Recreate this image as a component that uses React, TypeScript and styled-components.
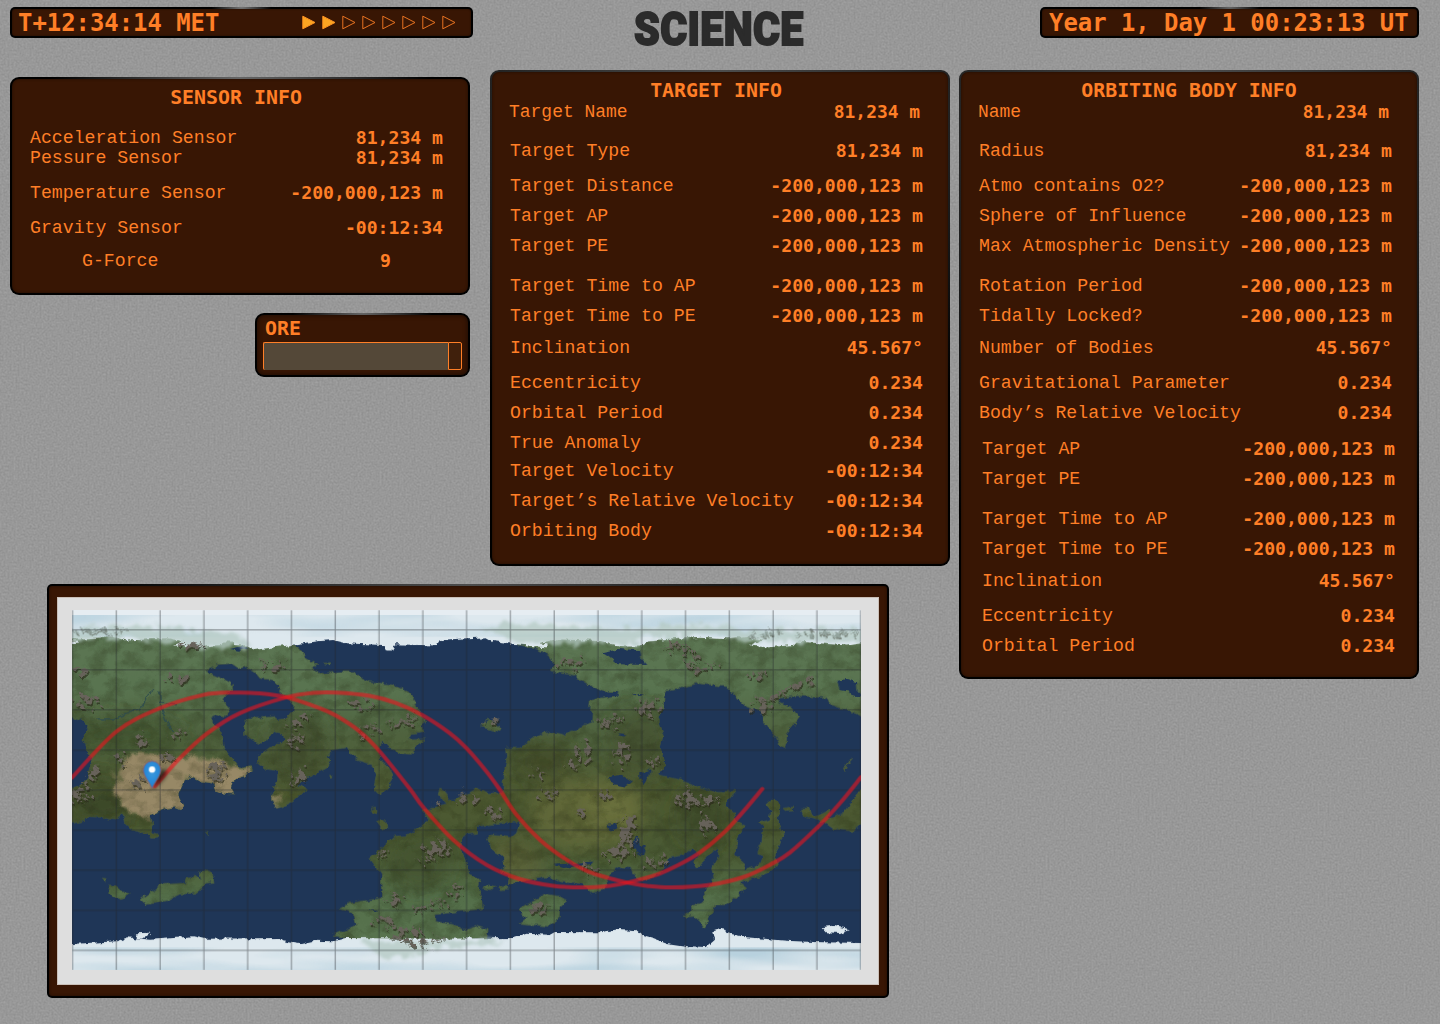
import React from "react";
import styled, { createGlobalStyle } from "styled-components";

const ORANGE = "#ff7f27";
const BROWN = "#381604";

const GlobalStyle = createGlobalStyle`
  * { box-sizing: border-box; }
  html, body { margin: 0; padding: 0; background: #999; }
  body { color: ${ORANGE}; font-family: "DejaVu Sans Mono", monospace; }
`;

const Page = styled.div`
  position: relative;
  width: 1440px;
  height: 1024px;
  overflow: hidden;
  background: #999;
`;

const Grain = styled.svg`
  position: absolute;
  inset: 0;
  width: 100%;
  height: 100%;
`;

const Content = styled.div`
  position: relative;
  display: flex;
  flex-direction: column;
  padding: 7px 21px 0 10px;
`;

const Header = styled.header`
  display: grid;
  grid-template-columns: 463px 1fr 379px;
  height: 63px;
`;

const Panel = styled.div<{ $radius?: number; $glow: string; $glowColor?: string }>`
  border: 2px solid transparent;
  border-radius: ${(p) => p.$radius ?? 9}px;
  background:
    radial-gradient(${BROWN}, ${BROWN}) padding-box,
    radial-gradient(${(p) => p.$glow} at 50% 0, ${(p) => p.$glowColor ?? "#4c4c4c"}, #000) border-box;
`;

const Bar = styled(Panel)`
  display: flex;
  align-items: center;
  justify-content: space-between;
  height: 31px;
  padding: 0 15px 0 6px;
  box-shadow: inset 0 0 2px rgba(0, 0, 0, 0.5);
`;

const DateBar = styled(Bar)`
  padding-left: 7px;
`;

const Clock = styled.span`
  font-size: 23.9px;
  line-height: 28px;
  font-weight: 700;
  white-space: pre;
`;

const Arrows = styled.div`
  display: flex;
  gap: 6px;
`;

const Arrow = styled.svg`
  display: block;
  width: 14px;
  height: 15px;
`;

const Title = styled.h1`
  margin: 0;
  padding-left: 161px;
  height: 44px;
`;

const TitleWord = styled.span`
  display: block;
  width: 190px;
  color: #2b2b2b;
  font: 900 46px/44px Roboto, sans-serif;
  letter-spacing: 0.4px;
  -webkit-text-stroke: 1.8px #2b2b2b;
  transform: scaleX(0.895);
  transform-origin: 0 50%;
  white-space: nowrap;
`;

const Main = styled.main`
  display: grid;
  grid-template-columns: 940px 460px;
  gap: 9px;
  align-items: start;
`;

const Left = styled.div`
  display: flex;
  flex-direction: column;
  gap: 18px;
`;

const Upper = styled.div`
  display: grid;
  grid-template-columns: 460px 460px;
  gap: 20px;
  align-items: start;
`;

const SensorColumn = styled.div`
  display: flex;
  flex-direction: column;
  align-items: flex-end;
  gap: 18px;
  padding-top: 7px;
`;

const InfoPanel = styled(Panel)<{ $height: number }>`
  width: 460px;
  height: ${(p) => p.$height}px;
  padding: 8px 25px 0 18px;
  box-shadow: inset 0 0 3px rgba(0, 0, 0, 0.5);
`;

const PanelTitle = styled.h2<{ $pull?: number; $after?: number }>`
  margin: 0 ${(p) => p.$pull ?? 1}px ${(p) => p.$after ?? 0}px 0;
  font-size: 19.9px;
  line-height: 22px;
  font-weight: 700;
  text-align: center;
`;

const Row = styled.div<{ $gap?: number; $dx?: number; $inset?: number; $small?: boolean }>`
  display: flex;
  justify-content: space-between;
  margin: ${(p) => p.$gap ?? 0}px ${(p) => -(p.$dx ?? 0) + (p.$small ? 2 : 0)}px 0 ${(p) => p.$dx ?? 0}px;
  padding: 0 ${(p) => p.$inset ?? 0}px;
  font-size: ${(p) => (p.$small ? 17.9 : 18.13)}px;
  line-height: 20px;
  white-space: pre;
`;

const Label = styled.span`
  font-family: "Liberation Mono", monospace;
  font-size: 1.004em;
`;

const Value = styled.span`
  font-weight: 700;
`;

const OrePanel = styled(Panel)`
  width: 215px;
  height: 64px;
  padding: 1px 6px 0 6px;
  box-shadow: inset 0 0 5px rgba(0, 0, 0, 0.6);
`;

const OreTitle = styled.h3`
  margin: 0 0 1px;
  padding-left: 2px;
  font-size: 19.9px;
  line-height: 25px;
`;

const Gauge = styled.div`
  display: flex;
  width: 199px;
  height: 28px;
`;

const GaugeFill = styled.div`
  flex: 1;
  background: #544838;
  border: 1px solid ${ORANGE};
  border-width: 1px 0 0 1px;
  border-radius: 2px 0 0 2px;
`;

const GaugeRest = styled.div`
  width: 14px;
  background: #40200c;
  border: 1px solid ${ORANGE};
  border-radius: 0 2px 2px 0;
`;

const MapPanel = styled(Panel)`
  width: 842px;
  height: 414px;
  margin-left: 37px;
  padding: 11px 8px;
  box-shadow: inset 0 0 3px rgba(0, 0, 0, 0.5);
`;

const MapPaper = styled.div`
  width: 822px;
  height: 388px;
  padding: 13px 0 0 15px;
  background: #dedede;
  box-shadow: inset 0 0 0 1px #c9bfb8;
`;

const MapSvg = styled.svg`
  display: block;
  width: 789px;
  height: 360px;
`;

type Item = [string, string, number, number?];

const sensorRows: Item[] = [
  ["Acceleration Sensor", "81,234 m", 0],
  ["Pessure Sensor", "81,234 m", 0],
  ["Temperature Sensor", "-200,000,123 m", 15],
  ["Gravity Sensor", "-00:12:34", 15],
];

const targetRows: Item[] = [
  ["Target Type", "81,234 m", 19],
  ["Target Distance", "-200,000,123 m", 15],
  ["Target AP", "-200,000,123 m", 10],
  ["Target PE", "-200,000,123 m", 10],
  ["Target Time to AP", "-200,000,123 m", 20],
  ["Target Time to PE", "-200,000,123 m", 10],
  ["Inclination", "45.567°", 12],
  ["Eccentricity", "0.234", 15],
  ["Orbital Period", "0.234", 10],
  ["True Anomaly", "0.234", 10],
  ["Target Velocity", "-00:12:34", 8],
  ["Target’s Relative Velocity", "-00:12:34", 10],
  ["Orbiting Body", "-00:12:34", 10],
];

const bodyRows: Item[] = [
  ["Radius", "81,234 m", 19],
  ["Atmo contains O2?", "-200,000,123 m", 15],
  ["Sphere of Influence", "-200,000,123 m", 10],
  ["Max Atmospheric Density", "-200,000,123 m", 10],
  ["Rotation Period", "-200,000,123 m", 20],
  ["Tidally Locked?", "-200,000,123 m", 10],
  ["Number of Bodies", "45.567°", 12],
  ["Gravitational Parameter", "0.234", 15],
  ["Body’s Relative Velocity", "0.234", 10],
  ["Target AP", "-200,000,123 m", 16, 3],
  ["Target PE", "-200,000,123 m", 10, 3],
  ["Target Time to AP", "-200,000,123 m", 20, 3],
  ["Target Time to PE", "-200,000,123 m", 10, 3],
  ["Inclination", "45.567°", 12, 3],
  ["Eccentricity", "0.234", 15, 3],
  ["Orbital Period", "0.234", 10, 3],
];

const Rows = ({ items }: { items: Item[] }) => (
  <>
    {items.map(([label, value, gap, dx]) => (
      <Row key={label} $gap={gap} $dx={dx}>
        <Label>{label}</Label>
        <Value>{value}</Value>
      </Row>
    ))}
  </>
);

/* Map geography, in thirds of a pixel. Shapes run past the frame so rough edges stay outside it. */
const westLand =
  "50,150 50,400 97,425 125,435 145,455 130,490 150,540 155,570 145,610 120,632 97,640 50,650 50,745 97,745 130,740 150,725 185,727 225,735 250,715 255,745 275,765 320,775 330,790 360,790 355,778 330,772 340,750 330,720 380,700 405,697 425,705 430,690 415,660 435,615 455,605 480,618 520,625 527,645 550,655 583,657 573,640 580,615 610,605 640,585 635,575 600,580 575,550 555,520 550,490 540,460 510,432 530,420 555,430 570,400 545,372 580,345 575,325 550,312 510,295 505,285 530,272 575,268 595,282 620,275 645,290 660,310 700,315 720,335 715,350 745,370 762,390 758,410 740,432 715,435 700,422 625,430 612,450 615,480 640,495 655,510 680,495 700,470 725,475 735,490 710,515 690,518 660,540 652,560 680,585 712,590 710,620 697,650 698,675 710,700 725,697 760,680 800,640 770,630 830,595 860,580 870,560 860,545 880,525 920,518 950,555 1000,570 1010,600 1002,640 1020,658 1045,640 1060,600 1045,575 1020,555 1018,520 1025,495 1040,515 1080,535 1115,538 1130,510 1160,492 1105,495 1120,475 1150,470 1145,450 1158,440 1135,405 1130,385 1110,355 1060,330 990,320 960,305 945,290 900,290 850,296 815,278 835,270 800,250 790,230 760,210 720,190 720,150";
const eastLand =
  "1430,150 1430,208 1490,222 1530,240 1540,265 1535,290 1600,300 1640,325 1690,350 1730,352 1730,362 1680,370 1645,378 1643,395 1660,410 1658,445 1620,460 1575,480 1530,470 1480,490 1440,520 1400,520 1403,545 1390,600 1390,655 1350,655 1310,640 1260,670 1230,680 1215,645 1200,640 1195,660 1210,670 1220,690 1180,700 1150,705 1165,735 1150,750 1105,782 1060,785 1035,810 990,850 1025,900 1025,970 930,985 900,1002 940,1015 950,1050 920,1065 880,1082 940,1095 1190,1100 1340,1090 1345,1065 1310,1055 1280,1065 1240,1050 1185,1040 1185,1020 1240,1012 1280,1008 1328,1002 1325,970 1315,950 1320,915 1285,900 1280,870 1260,815 1270,780 1310,775 1310,755 1400,742 1440,740 1430,775 1415,788 1350,780 1340,790 1355,825 1390,845 1395,880 1380,890 1410,900 1405,930 1440,920 1530,905 1560,920 1630,930 1660,955 1685,950 1700,930 1710,895 1740,875 1775,880 1780,900 1805,915 1840,910 1870,885 1885,850 1930,840 1955,820 1980,840 1960,865 1970,885 1980,865 2030,820 2037,840 2015,880 2025,910 1990,950 1995,980 1955,995 1955,1010 1925,1025 1960,1022 1980,1040 1995,1060 2005,1030 2020,1010 2025,990 2060,990 2120,940 2100,925 2180,895 2220,870 2200,845 2215,820 2230,780 2215,750 2220,690 2200,672 2180,690 2195,710 2190,735 2155,745 2170,760 2165,805 2150,835 2170,845 2160,870 2110,890 2115,865 2085,840 2095,780 2115,755 2090,740 2080,710 2055,690 2085,650 2020,650 1970,635 1920,615 1855,600 1875,575 1860,520 1870,480 1855,430 1870,400 1875,345 1920,340 1970,325 2060,335 2085,360 2120,395 2170,415 2170,440 2190,465 2210,490 2220,510 2235,518 2240,500 2240,475 2260,450 2277,425 2255,400 2215,385 2220,370 2270,362 2360,368 2370,390 2420,405 2463,422 2510,430 2510,150";
const islands = [
  "205,935 225,932 240,945 272,958 240,972 215,968",
  "303,975 345,945 365,930 435,925 440,910 465,905 485,915 478,895 495,887 518,895 523,922 495,925 490,940 470,955 420,958 380,978 320,990",
  "1435,1005 1470,985 1520,958 1560,965 1582,978 1560,995 1558,1030 1525,1055 1440,1045 1460,1030",
  "1322,455 1350,430 1362,445 1385,462 1380,470 1345,462",
  "1325,940 1345,930 1365,935 1355,945",
  "1375,935 1400,932 1405,942 1385,945",
  "1010,737 1035,738 1048,760 1030,765",
  "995,700 1010,697 1012,712 998,715",
  "2285,700 2310,700 2315,720 2330,725 2370,705 2365,735 2410,715 2463,640 2510,600 2510,750 2463,750 2440,770 2380,762 2350,740 2290,725",
  "2410,580 2425,560 2438,550 2420,572 2415,590",
  "2230,700 2258,697 2258,708 2235,710",
  "185,910 197,912 196,922",
  "500,773 507,773 506,779",
  "850,265 873,263 870,272",
  "865,605 880,605 875,614",
];
const lakes = [
  "1685,232 1730,222 1800,225 1805,250 1822,270 1735,268 1705,245",
  "1700,350 1735,352 1733,362 1690,366",
  "1700,608 1745,600 1778,620 1760,635 1720,628",
  "1798,595 1832,583 1828,605 1812,628 1798,610",
  "2390,318 2420,312 2450,322 2452,345 2465,365 2435,360 2425,350 2400,345",
  "1783,785 1795,782 1800,810 1815,815 1810,845 1795,840 1780,815",
  "1700,750 1730,748 1728,765 1712,770",
  "570,222 610,213 630,218 600,227",
  "1735,478 1758,480 1752,490",
  "1542,870 1600,865 1660,860 1655,868 1570,880",
  "980,1004 1015,1004 1012,1009",
  "1775,357 1818,358 1800,363",
];
const topIce =
  "40,60 40,193 97,193 140,193 185,190 200,183 235,188 260,197 380,190 430,198 400,212 480,215 545,210 550,200 580,200 580,210 630,212 640,225 700,218 745,212 790,205 840,198 880,195 920,205 1030,210 1040,230 1058,230 1065,208 1190,212 1200,195 1280,190 1340,187 1360,198 1430,208 1520,218 1520,208 1495,205 1550,193 1680,198 1740,215 1800,215 1825,200 1870,196 1980,185 2060,190 2120,183 2170,195 2130,212 2180,218 2260,210 2270,200 2340,205 2420,212 2463,205 2520,205 2520,60";
const bottomIce =
  "40,1240 40,1110 97,1108 230,1100 265,1088 330,1095 375,1092 460,1085 495,1092 720,1090 730,1100 780,1108 825,1098 880,1100 920,1090 1190,1092 1420,1090 1460,1077 1530,1080 1545,1072 1680,1073 1740,1063 1790,1067 1805,1080 1840,1090 1880,1105 1945,1115 2000,1117 2025,1095 2020,1070 2050,1060 2060,1075 2120,1088 2240,1098 2320,1102 2463,1105 2520,1105 2520,1240";

const peaks: [number, number, number, number, number?][] = [
  [410, 312, 38, 16], [120, 290, 26, 14], [140, 380, 42, 20], [303, 497, 18, 22], [240, 550, 16, 22],
  [380, 545, 20, 14], [410, 475, 22, 12], [155, 600, 12, 38, 35], [120, 660, 40, 20, -20], [530, 590, 30, 30],
  [295, 620, 24, 24], [775, 435, 45, 12, -20], [700, 270, 42, 12], [450, 210, 50, 8], [980, 465, 40, 18, -20],
  [1090, 440, 48, 14, -12], [955, 388, 38, 12], [770, 500, 20, 28], [770, 600, 22, 30, 30], [1600, 262, 42, 14, -14],
  [1710, 440, 34, 20], [1825, 395, 36, 24], [1742, 535, 24, 36, 20], [1630, 520, 20, 28], [1615, 565, 34, 14, -14],
  [1490, 595, 18, 14], [1905, 215, 38, 14], [1950, 245, 24, 14], [1985, 275, 48, 14, -10], [2150, 300, 36, 10],
  [2170, 390, 36, 16], [2280, 330, 38, 12, -20], [2215, 360, 36, 10, -30], [1940, 670, 34, 28], [2005, 678, 34, 10],
  [1995, 745, 24, 30], [1735, 830, 42, 24], [1760, 765, 24, 48], [1845, 860, 42, 16, -15], [1190, 820, 44, 30],
  [1150, 860, 16, 8], [1060, 975, 26, 14], [1160, 995, 58, 10, -12], [1245, 955, 20, 20, -40], [1030, 1040, 36, 14],
  [1090, 1065, 60, 14], [1140, 1098, 60, 14], [1280, 670, 30, 18], [1360, 710, 26, 20], [1620, 710, 16, 12],
  [1650, 880, 30, 10], [1500, 1005, 28, 14], [1025, 842, 16, 10], [1690, 660, 20, 12], [1830, 560, 28, 16],
  [1190, 685, 12, 8], [1520, 655, 26, 14], [1350, 445, 20, 8],
];

const orbitA: number[][] = [
  [97, 608], [230, 470], [360, 400], [490, 360], [575, 353], [660, 355], [740, 367], [840, 400], [890, 423], [960, 470],
  [1020, 530], [1110, 642], [1150, 697], [1240, 795], [1340, 870], [1440, 913], [1540, 933], [1630, 938], [1710, 933],
  [1765, 923], [1850, 900], [1920, 868], [1980, 833], [2050, 775], [2110, 710], [2167, 642],
];
const orbitB: number[][] = [
  [345, 634], [420, 550], [500, 477], [600, 415], [740, 367], [820, 354], [890, 353], [990, 363], [1070, 385], [1150, 422],
  [1230, 475], [1280, 520], [1340, 590], [1378, 642], [1430, 720], [1500, 795], [1580, 855], [1650, 892], [1760, 923],
  [1820, 933], [1895, 938], [2010, 930], [2110, 907], [2190, 870], [2250, 833], [2340, 750], [2400, 685], [2463, 607],
];

const smooth = (pts: number[][]) =>
  pts.reduce((d, p, i) => {
    if (i === 0) return `M${p[0]},${p[1]}`;
    const a = pts[i - 2] ?? pts[i - 1];
    const b = pts[i - 1];
    const n = pts[i + 1] ?? p;
    return `${d}C${b[0] + (p[0] - a[0]) / 6},${b[1] + (p[1] - a[1]) / 6} ${p[0] - (n[0] - b[0]) / 6},${p[1] - (n[1] - b[1]) / 6} ${p[0]},${p[1]}`;
  }, "");

const WorldMap = () => (
  <MapSvg viewBox="97 105 2366 1081" preserveAspectRatio="none">
    <defs>
      <filter id="coast" x="0" y="0" width="100%" height="100%" colorInterpolationFilters="sRGB">
        <feTurbulence type="fractalNoise" baseFrequency="0.05" numOctaves="3" seed="4" />
        <feDisplacementMap in="SourceGraphic" scale="17" xChannelSelector="R" yChannelSelector="G" />
      </filter>
      <filter id="relief" x="0" y="0" width="100%" height="100%" colorInterpolationFilters="sRGB">
        <feTurbulence type="fractalNoise" baseFrequency="0.02 0.028" numOctaves="5" seed="9" result="n" />
        <feColorMatrix in="n" type="matrix" values="0 0 0 0 0.14  0 0 0 0 0.16  0 0 0 0 0.07  2 0 0 0 -0.8" />
        <feComposite in2="SourceAlpha" operator="in" />
      </filter>
      <filter id="rock" x="-10%" y="-20%" width="120%" height="140%" colorInterpolationFilters="sRGB">
        <feTurbulence type="fractalNoise" baseFrequency="0.05" numOctaves="4" seed="21" result="n" />
        <feDisplacementMap in="SourceGraphic" in2="n" scale="55" xChannelSelector="R" yChannelSelector="G" result="s" />
        <feColorMatrix in="n" type="matrix" values="0 0 0 0 1  0 0 0 0 1  0 0 0 0 1  0 0 9 0 -4" result="m" />
        <feComposite in="s" in2="m" operator="in" result="r" />
        <feOffset in="r" dx="4" dy="5" result="o" />
        <feColorMatrix in="o" type="matrix" values="0 0 0 0 0.16  0 0 0 0 0.16  0 0 0 0 0.1  0 0 0 0.65 0" result="sh" />
        <feMerge result="both">
          <feMergeNode in="sh" />
          <feMergeNode in="r" />
        </feMerge>
        <feGaussianBlur in="both" stdDeviation="1.4" />
      </filter>
      <filter id="soft" x="-30%" y="-30%" width="160%" height="160%">
        <feGaussianBlur stdDeviation="26" />
      </filter>
      <filter id="edge" x="-10%" y="-10%" width="120%" height="120%">
        <feTurbulence type="fractalNoise" baseFrequency="0.03" numOctaves="3" seed="2" result="n" />
        <feDisplacementMap in="SourceGraphic" in2="n" scale="50" result="d" />
        <feGaussianBlur in="d" stdDeviation="5" />
      </filter>
      <filter id="cloud" x="0" y="0" width="100%" height="100%" colorInterpolationFilters="sRGB">
        <feTurbulence type="fractalNoise" baseFrequency="0.0025 0.018" numOctaves="2" seed="7" />
        <feColorMatrix type="matrix" values="0 0 0 0 0.72  0 0 0 0 0.82  0 0 0 0 0.87  2.4 0 0 0 -0.95" />
        <feComposite in2="SourceAlpha" operator="in" />
      </filter>
      <linearGradient id="ground" gradientUnits="userSpaceOnUse" x1="0" y1="105" x2="0" y2="1186">
        <stop offset="0.08" stopColor="#5c7653" />
        <stop offset="0.22" stopColor="#597450" />
        <stop offset="0.34" stopColor="#4f633f" />
        <stop offset="0.52" stopColor="#4d5931" />
        <stop offset="0.68" stopColor="#4a5a34" />
        <stop offset="0.8" stopColor="#546f4a" />
        <stop offset="1" stopColor="#5c7752" />
      </linearGradient>
      <clipPath id="landClip">
        <polygon points={westLand} />
        <polygon points={eastLand} />
      </clipPath>
      <radialGradient id="pinFill" cx="0.5" cy="0.4" r="0.6">
        <stop offset="0" stopColor="#3d9ae0" />
        <stop offset="1" stopColor="#1d7fd0" />
      </radialGradient>
      <filter id="pinShadow" x="-50%" y="-50%" width="200%" height="200%">
        <feGaussianBlur stdDeviation="6" />
      </filter>
    </defs>

    <rect x="97" y="105" width="2366" height="1081" fill="#1f3657" />

    <g filter="url(#coast)">
      <g fill="url(#ground)" stroke="#4a5c42" strokeWidth="2">
        <polygon points={westLand} />
        <polygon points={eastLand} />
        {islands.map((p) => (
          <polygon key={p} points={p} />
        ))}
      </g>
      <g clipPath="url(#landClip)">
        <g filter="url(#soft)">
          <ellipse cx="1640" cy="720" rx="170" ry="110" fill="#6c713a" opacity="0.6" />
          <ellipse cx="1720" cy="690" rx="90" ry="60" fill="#73763f" opacity="0.5" />
          <ellipse cx="1510" cy="560" rx="90" ry="60" fill="#414b28" opacity="0.8" />
          <ellipse cx="1420" cy="880" rx="90" ry="90" fill="#5f6335" opacity="0.6" />
          <ellipse cx="1990" cy="720" rx="80" ry="100" fill="#3c4826" opacity="0.7" />
          <ellipse cx="1800" cy="500" rx="90" ry="110" fill="#434e2c" opacity="0.7" />
          <ellipse cx="190" cy="690" rx="90" ry="60" fill="#384328" opacity="0.8" />
          <ellipse cx="250" cy="480" rx="180" ry="50" fill="#42542f" opacity="0.8" />
          <ellipse cx="770" cy="520" rx="90" ry="110" fill="#424e2d" opacity="0.7" />
          <ellipse cx="1140" cy="860" rx="90" ry="90" fill="#445130" opacity="0.7" />
        </g>
        <g filter="url(#edge)" fill="#978866">
          <polygon points="235,575 270,540 350,540 400,560 470,548 530,560 570,570 640,590 660,670 520,660 440,605 450,730 340,735 335,740 240,690 225,640" />
          <polygon points="697,660 725,650 720,700 700,710" opacity="0.7" />
        </g>
      </g>
      <g fill="#000" filter="url(#relief)" opacity="0.36">
        <polygon points={westLand} />
        <polygon points={eastLand} />
        {islands.map((p) => (
          <polygon key={p} points={p} />
        ))}
      </g>
      <g fill="#1f3657">
        {lakes.map((p) => (
          <polygon key={p} points={p} />
        ))}
      </g>
    </g>

    <g fill="none" stroke="#2c4a50" strokeWidth="4" filter="url(#coast)" opacity="0.8">
      <path d="M170,432 L225,432 L260,415 L300,405 L325,360 L345,345" />
      <path d="M360,350 L362,385 L410,390 M365,395 L380,440 L400,470" />
    </g>

    <g fill="#dde8ee" filter="url(#coast)">
      <polygon points={topIce} />
      <polygon points={bottomIce} />
      <polygon points="285,1076 335,1074 325,1085 300,1092" />
      <polygon points="2345,1057 2380,1053 2430,1063 2400,1075 2360,1073" />
      <polygon points="97,200 115,200 118,206 97,207" />
    </g>
    <g fill="#fff" filter="url(#cloud)">
      <rect x="60" y="80" width="2440" height="105" />
      <rect x="60" y="1118" width="2440" height="100" />
    </g>
    <g filter="url(#edge)" fill="#b4c9c3">
      <polygon points="60,165 280,155 480,165 610,185 640,220 480,215 400,205 260,190 60,192" opacity="0.75" />
      <polygon points="1320,160 1400,140 1520,150 1640,155 1740,165 1900,150 2040,150 2100,165 2500,165 2500,200 2120,200 2000,180 1860,190 1740,205 1440,205" opacity="0.75" />
      <polygon points="960,1100 1400,1098 1320,1115 1200,1120 1100,1150 1020,1140" opacity="0.75" />
    </g>
    <rect x="97" y="105" width="2366" height="14" fill="#e6edf2" />

    <g fill="#67625a" filter="url(#rock)">
      {peaks.map(([x, y, rx, ry, turn]) => (
        <ellipse key={`${x}-${y}`} cx={x + 2} cy={y} rx={rx} ry={ry} transform={`rotate(${turn ?? 0} ${x} ${y})`} />
      ))}
    </g>
    <g fill="#7f8f88" filter="url(#rock)" opacity="0.7">
      <ellipse cx="2170" cy="178" rx="50" ry="9" />
      <ellipse cx="2360" cy="174" rx="90" ry="7" />
      <ellipse cx="170" cy="166" rx="90" ry="5" />
    </g>

    <g stroke="#26282c" strokeWidth="3" opacity="0.5">
      {Array.from({ length: 19 }, (_, i) => (
        <line key={i} x1={98.5 + i * 131.3} x2={98.5 + i * 131.3} y1="105" y2="1186" />
      ))}
      {Array.from({ length: 9 }, (_, i) => (
        <line key={i} x1="97" x2="2463" y1={164.5 + i * 120.3} y2={164.5 + i * 120.3} />
      ))}
    </g>

    <g fill="none" stroke="#ec141e" strokeWidth="12" strokeLinecap="round">
      <path d={smooth(orbitA)} opacity="0.6" />
      <path d={smooth(orbitB)} opacity="0.6" />
    </g>

    <path d="M338,642 L352,600 Q372,575 382,590 Q380,612 338,642" fill="#000" opacity="0.65" filter="url(#pinShadow)" />
    <path
      d="M337,641 C330,622 311,604 311,585 A26,26 0 0 1 363,585 C363,604 344,622 337,641 Z"
      fill="url(#pinFill)"
      stroke="#8d5a74"
      strokeWidth="2.5"
    />
    <circle cx="337" cy="584" r="9.5" fill="#fff" />
  </MapSvg>
);

export default function App() {
  return (
    <Page>
      <GlobalStyle />
      <Grain>
        <filter id="grain" x="0" y="0" width="100%" height="100%" colorInterpolationFilters="sRGB">
          <feTurbulence type="fractalNoise" baseFrequency="0.5" numOctaves="3" seed="3" />
          <feColorMatrix type="matrix" values="0.1 0.04 0 0 0.525  0.1 0.04 0 0 0.525  0.1 0.04 0 0 0.525  0 0 0 0 1" />
        </filter>
        <rect width="1440" height="1024" filter="url(#grain)" />
      </Grain>
      <Content>
        <Header>
          <Bar $radius={5} $glow="30px 14px" $glowColor="#777">
            <Clock>T+12:34:14 MET</Clock>
            <Arrows>
              {Array.from({ length: 8 }, (_, i) => (
                <Arrow key={i} viewBox="0 0 14 15">
                  <polygon
                    points="0.8,1.2 13,7.5 0.8,13.8"
                    fill={i < 2 ? "#fba522" : "none"}
                    stroke={i < 2 ? "#ff9222" : "#e87322"}
                    strokeWidth="1"
                  />
                </Arrow>
              ))}
            </Arrows>
          </Bar>
          <Title>
            <TitleWord>SCIENCE</TitleWord>
          </Title>
          <DateBar $radius={5} $glow="30px 14px" $glowColor="#666">
            <Clock>Year 1, Day 1 00:23:13 UT</Clock>
          </DateBar>
        </Header>
        <Main>
          <Left>
            <Upper>
              <SensorColumn>
                <InfoPanel $glow="190px 60px" $glowColor="#666" $height={218}>
                  <PanelTitle $after={19}>SENSOR INFO</PanelTitle>
                  <Rows items={sensorRows} />
                  <Row $gap={13} $inset={52}>
                    <Label>G-Force</Label>
                    <Value>9</Value>
                  </Row>
                </InfoPanel>
                <OrePanel $glow="70px 20px" $glowColor="#666">
                  <OreTitle>ORE</OreTitle>
                  <Gauge>
                    <GaugeFill />
                    <GaugeRest />
                  </Gauge>
                </OrePanel>
              </SensorColumn>
              <InfoPanel $glow="420px 380px" $height={496}>
                <PanelTitle>TARGET INFO</PanelTitle>
                <Row $dx={-1} $small>
                  <Label>Target Name</Label>
                  <Value>81,234 m</Value>
                </Row>
                <Rows items={targetRows} />
              </InfoPanel>
            </Upper>
            <MapPanel $radius={5} $glow="380px 280px">
              <MapPaper>
                <WorldMap />
              </MapPaper>
            </MapPanel>
          </Left>
          <InfoPanel $glow="440px 520px" $height={609}>
            <PanelTitle $pull={-7}>ORBITING BODY INFO</PanelTitle>
            <Row $dx={-1} $small>
              <Label>Name</Label>
              <Value>81,234 m</Value>
            </Row>
            <Rows items={bodyRows} />
          </InfoPanel>
        </Main>
      </Content>
    </Page>
  );
}
